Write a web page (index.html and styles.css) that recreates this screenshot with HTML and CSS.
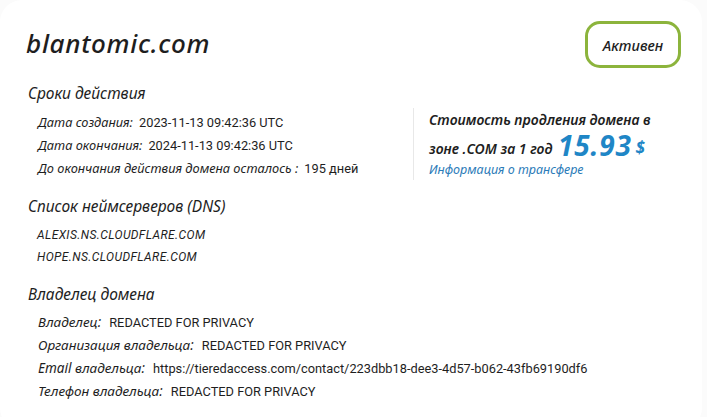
FILE: index.html
```html
<!DOCTYPE html>
<html lang="ru">
<head>
<meta charset="utf-8">
<title>blantomic.com</title>
<link rel="stylesheet" href="styles.css">
</head>
<body>
<div class="card">
  <div class="header">
    <h1 class="domain">blantomic.com</h1>
    <div class="badge">Активен</div>
  </div>

  <h2 class="section-title first">Сроки действия</h2>
  <div class="terms">
    <ul class="rows">
      <li><span class="label">Дата создания:</span> <span class="value">2023-11-13 09:42:36 UTC</span></li>
      <li><span class="label">Дата окончания:</span> <span class="value">2024-11-13 09:42:36 UTC</span></li>
      <li><span class="label">До окончания действия домена осталось :</span> <span class="value">195 дней</span></li>
    </ul>
    <div class="price">
      <div class="price-line">Стоимость продления домена в</div>
      <div class="price-line second">зоне .COM за 1 год <span class="amount">15.93</span> <span class="currency">$</span></div>
      <a class="transfer" href="#">Информация о трансфере</a>
    </div>
  </div>

  <h2 class="section-title">Список неймсерверов (DNS)</h2>
  <ul class="rows dns">
    <li class="ns">ALEXIS.NS.CLOUDFLARE.COM</li>
    <li class="ns">HOPE.NS.CLOUDFLARE.COM</li>
  </ul>

  <h2 class="section-title">Владелец домена</h2>
  <ul class="rows owner">
    <li><span class="label">Владелец:</span> <span class="value">REDACTED FOR PRIVACY</span></li>
    <li><span class="label">Организация владельца:</span> <span class="value">REDACTED FOR PRIVACY</span></li>
    <li><span class="label">Email владельца:</span> <span class="value">https://tieredaccess.com/contact/223dbb18-dee3-4d57-b062-43fb69190df6</span></li>
    <li><span class="label">Телефон владельца:</span> <span class="value">REDACTED FOR PRIVACY</span></li>
  </ul>
</div>
</body>
</html>
```

FILE: styles.css
```css
* { box-sizing: border-box; }

html, body {
  margin: 0;
  padding: 0;
  background: #fbfbfb;
}

body {
  font-family: "Noto Sans", "Open Sans", sans-serif;
  color: #1e1e1e;
}

.card {
  background: #ffffff;
  border-radius: 22px;
  min-height: 430px;
  padding: 21px 26px 0 26px;
  width: 702px;
}

.header {
  display: flex;
  justify-content: space-between;
  align-items: center;
  padding-right: 0;
}

.domain {
  margin: -3px 0 0 0;
  font-size: 26px;
  font-weight: 500;
  font-style: italic;
  letter-spacing: 0.7px;
  line-height: 30px;
}

.badge {
  width: 96px;
  height: 47px;
  margin-right: -5px;
  border: 3px solid #8cb43c;
  border-radius: 15px;
  display: flex;
  align-items: center;
  justify-content: center;
  font-size: 14.5px;
  font-style: italic;
  font-weight: 500;
}

.section-title {
  margin: 16px 0 0 2px;
  font-size: 15.5px;
  font-weight: 400;
  font-style: italic;
  line-height: 20px;
}

.section-title.first { margin-top: 15px; }

.rows {
  list-style: none;
  margin: 8px 0 0 0;
  padding: 0 0 0 12px;
}

.rows li {
  font-size: 12px;
  line-height: 23px;
  white-space: nowrap;
}

.label {
  font-style: italic;
  font-size: 12.8px;
}

.value {
  font-family: Roboto, "Noto Sans", sans-serif;
  font-size: 12.8px;
  margin-left: 3px;
}

.terms {
  display: flex;
  align-items: flex-start;
}

.terms .rows {
  width: 387px;
}

.price {
  margin-top: 5px;
  border-left: 1px solid #e8e8e8;
  padding: 2px 0 4px 15px;
  height: 72px;
}

.price-line {
  font-size: 14px;
  font-weight: 600;
  font-style: italic;
  line-height: 20px;
  white-space: nowrap;
}

.price-line.second {
  line-height: 26px;
  margin-top: 2px;
}

.amount {
  color: #1f86c6;
  font-size: 28px;
  font-weight: 700;
  font-style: italic;
  letter-spacing: 0.8px;
  vertical-align: -2px;
  margin-left: 2px;
}

.currency {
  color: #1f86c6;
  font-size: 17px;
  font-weight: 700;
  font-style: italic;
}

.transfer {
  display: block;
  color: #2b7bb8;
  font-size: 12.5px;
  font-style: italic;
  text-decoration: none;
  line-height: 20px;
  margin-top: -2px;
}

.dns {
  margin-top: 8px;
  padding-left: 11px;
}

.dns li {
  line-height: 22px;
}

.ns {
  font-family: Roboto, "Noto Sans", sans-serif;
  font-style: italic;
  font-size: 13.5px;
  letter-spacing: 0.4px;
}

.owner {
  margin-top: 7px;
  padding-left: 12px;
}

.owner .label {
  font-size: 13.5px;
}

.owner .value {
  font-size: 12.8px;
  margin-left: 5px;
}
```
